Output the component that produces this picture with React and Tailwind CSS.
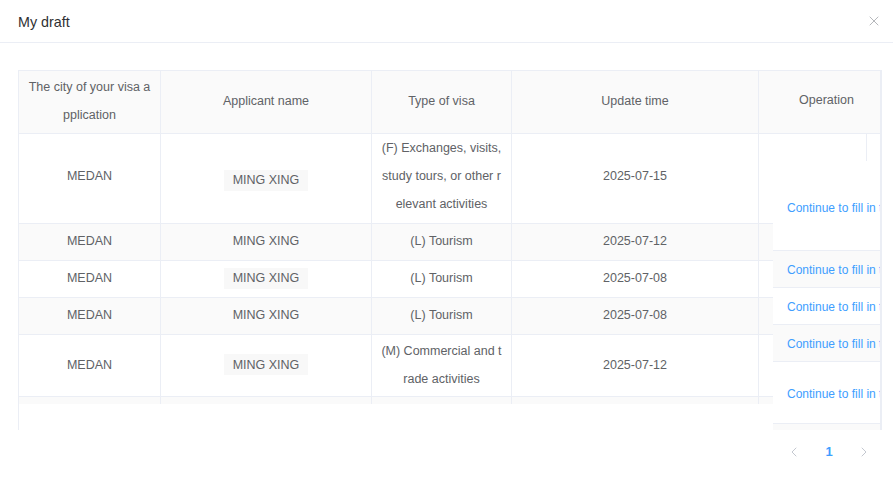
import { X, ChevronLeft, ChevronRight } from 'lucide-react';

const rows = [
  { h: 'h-[90px]', pad: 'pb-[5px]', tag: true, tagOffset: 'mt-[8px]', type: ['(F) Exchanges, visits,', 'study tours, or other r', 'elevant activities'], date: '2025-07-15' },
  { h: 'h-[37px]', tag: false, type: ['(L) Tourism'], date: '2025-07-12', stripe: true },
  { h: 'h-[37px]', tag: true, type: ['(L) Tourism'], date: '2025-07-08' },
  { h: 'h-[37px]', tag: false, type: ['(L) Tourism'], date: '2025-07-08', stripe: true },
  { h: 'h-[62px]', tag: true, type: ['(M) Commercial and t', 'rade activities'], date: '2025-07-12' },
  { h: 'h-[62px]', tag: false, type: [''], date: '', city: '', name: '', stripe: true },
];

const fixedRows = [
  { h: 'h-[90px]', pad: 'pt-[4px]' },
  { h: 'h-[37px]', stripe: true },
  { h: 'h-[37px]' },
  { h: 'h-[37px]', stripe: true },
  { h: 'h-[62px]' },
];

const cell = 'flex flex-col items-center justify-center border-r border-[#ebeef5] text-center';

export default function App() {
  return (
    <div className="w-[893px] h-[490px] bg-white text-[#606266] font-['Liberation_Sans',Arial,sans-serif]">
      <div className="flex h-[43px] items-center justify-between border-b border-[#ebeef5] pt-[3px] pl-[18px] pr-[11px]">
        <span className="text-[14.3px] text-[#303133]">My draft</span>
        <X size={16} strokeWidth={1} className="-mt-[3px] text-[#909399]" />
      </div>

      <div className="relative mt-[27px] ml-[18px] h-[360px] w-[864px] border-l border-r border-t border-[#ebeef5] text-[12.5px]">
        <div className="flex h-[63px] border-b border-[#ebeef5] bg-[#fafafa] leading-[28px]">
          <div className={`${cell} w-[142px] whitespace-nowrap pb-[3px]`}>
            <span>The city of your visa a</span>
            <span>pplication</span>
          </div>
          <div className={`${cell} w-[211px] pb-[3px]`}>Applicant name</div>
          <div className={`${cell} w-[140px] pb-[3px]`}>Type of visa</div>
          <div className={`${cell} w-[247px] pb-[3px]`}>Update time</div>
          <div className={`${cell} w-[122px]`} />
        </div>

        <div className="h-[270px] overflow-hidden leading-[28px]">
          {rows.map((r, i) => (
            <div key={i} className={`flex ${r.h} shrink-0 border-b border-[#ebeef5] ${r.stripe ? 'bg-[#fafafa]' : 'bg-white'}`}>
              <div className={`${cell} w-[142px] ${r.pad ?? 'pb-[2px]'}`}>{r.city ?? 'MEDAN'}</div>
              <div className={`${cell} w-[211px] ${r.pad ?? 'pb-[2px]'}`}>
                {r.name === '' ? null : r.tag ? (
                  <span className={`flex h-[21px] items-center bg-[#f8f8f8] px-[9px] ${r.tagOffset ?? ''}`}>MING XING</span>
                ) : (
                  <span>MING XING</span>
                )}
              </div>
              <div className={`${cell} w-[140px] ${r.pad ?? 'pb-[2px]'}`}>
                {r.type.map((t, j) => (
                  <span key={j} className="whitespace-nowrap">{t}</span>
                ))}
              </div>
              <div className={`${cell} w-[247px] ${r.pad ?? 'pb-[2px]'}`}>{r.date}</div>
              <div className={`${cell} w-[122px]`} />
            </div>
          ))}
        </div>

        <div className="absolute top-0 left-[754px] flex w-[108px] flex-col border-r border-[#ebeef5] bg-white">
          <div className="flex h-[63px] items-center justify-center border-b border-[#ebeef5] bg-[#fafafa] pb-[3px]">Operation</div>
          <div className="flex h-[27px] justify-end">
            <div className="w-[14px] border-l border-[#ebeef5]" />
          </div>
          {fixedRows.map((r, i) => (
            <div key={i} className={`flex ${r.h} items-center overflow-hidden border-b border-[#ebeef5] pl-[14px] ${r.pad ?? 'pt-[2px]'} ${r.stripe ? 'bg-[#fafafa]' : 'bg-white'}`}>
              <span className="whitespace-nowrap text-[12px] text-[#409eff]">Continue to fill in the form</span>
            </div>
          ))}
          <div className="h-[6px] bg-[#fafafa]" />
        </div>
      </div>

      <div className="mt-[8px] flex h-[28px] items-center justify-end gap-[5px] pr-[14px]">
        <div className="flex w-[30px] justify-center text-[#c0c4cc]">
          <ChevronLeft size={16} strokeWidth={1.4} />
        </div>
        <div className="flex w-[30px] justify-center text-[13px] font-bold text-[#409eff]">1</div>
        <div className="flex w-[30px] justify-center text-[#c0c4cc]">
          <ChevronRight size={16} strokeWidth={1.4} />
        </div>
      </div>
    </div>
  );
}
